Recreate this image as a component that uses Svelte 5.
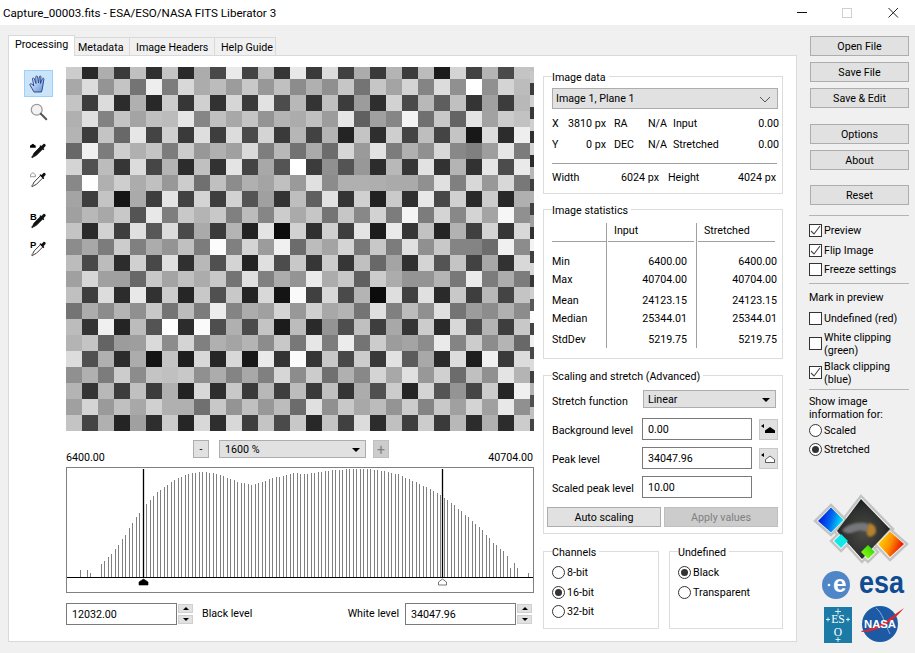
<script>
	const gridRows = [
		'cc 28 ae 3a c0 30 c4 2a ac 48 ea 44 bf 36 e8 3a dc 40 ac 3a b4 3c bc 1c d4 42 b4 4a c4',
		'a8 dc 94 c4 74 ee 7c d8 ac bc 9c c8 98 c0 8c b0 90 c6 74 c6 a4 d4 84 dc 90 ff 90 d4 bc',
		'c4 3c dc 2c b0 28 cc 36 d0 32 d6 3a e2 4c b8 34 c0 3c 9c 2e d2 4a b8 5e c0 34 a0 3c b8',
		'b0 e0 82 c4 a4 c0 bc e6 86 c0 a8 c4 94 b4 ac c0 9c e6 60 a0 86 f4 70 c8 64 e4 a2 cc c2',
		'b4 3c c4 68 e6 44 d0 3a de 3e dc 4a d4 3a b6 42 b4 24 c4 2e ce 44 be 44 c4 18 dc 2c ee',
		'68 f0 7c ce b0 c4 7c cc 98 b0 a0 da 7e b8 72 aa 6c d6 9a e2 7c b0 90 d8 88 80 9e e6 7c',
		'd4 50 bc 36 dc 46 b4 2c c0 32 e4 44 a8 54 ff 3c 90 54 98 2c b8 36 e2 32 b4 32 e6 4c ea',
		'88 fe b0 ce ac c0 98 cc 70 c0 8c b0 a4 c0 9a e0 8c b0 b0 ae aa aa 90 e0 80 d8 98 d8 78',
		'a4 3e c4 16 aa 3e e4 42 d4 3e d2 54 a0 34 be 60 e2 34 d0 22 ca 30 e8 48 d0 2a cc 28 b0',
		'a0 b8 a8 c8 54 e8 7e c8 b4 c8 80 bc 86 cc aa c6 74 c6 88 d2 7c f4 7c d4 88 d4 a4 f6 90',
		'c4 2a d2 3e e0 58 dc 4a aa 3a b4 22 e4 0c d2 30 d0 3e e4 1c ea 36 c2 24 b2 40 d4 36 d8',
		'8c a8 7c cc 80 ac 94 c0 7c fc 80 d4 9c f0 6c bc a4 d4 78 c8 7c e0 90 c8 84 84 6c f0 8c',
		'bc 48 bc 2c d0 48 e0 30 b8 50 d4 24 e0 4c c8 36 cc 36 c0 68 a4 30 d4 54 c4 42 a8 32 d8',
		'a0 d6 a0 a0 68 c8 a4 c0 ac c8 74 e0 80 ac 94 ea ac c8 60 cc ac 94 94 b4 78 ea 7c ac 7c',
		'c0 3e dc 2c e8 32 cc 26 c8 50 c8 24 d8 14 fa 40 d8 4a b4 0c de 40 e0 2a c8 3e b8 44 c4',
		'74 ac 8c b4 90 c8 74 bc 7c ec 84 ac a0 d4 98 d0 a8 b4 74 e0 80 bc 90 e0 74 9c 8c b0 8c',
		'bc 34 f0 24 bc 54 fe 2c fa 4e b0 4a c4 1c bc 2a 94 4e c0 3e a8 34 cc 2a d8 4a b4 3e c8',
		'b4 c4 64 9c 9e da 8c d4 80 b0 a4 b4 8c c8 78 e6 7c ec 74 cc 9c a4 8c ea 84 cc 8c b4 68',
		'dc 50 b0 2c ac 14 c4 1e d8 26 d8 18 ea 34 fa 36 c8 48 cc 38 e2 5c a8 2a dc 1e f0 3a dc',
		'90 b0 7c cc 8c c4 c0 c8 90 ac 84 a8 80 d6 8c cc 70 b0 88 d4 a8 e0 98 d0 6c c0 90 e4 b4',
		'b4 34 b8 3c c0 3c b0 22 d8 2e c8 3a b8 3e bc 3a c0 34 ac 50 cc 26 d4 54 94 46 cc 26 f0',
		'a0 d4 9a c0 a8 d0 b0 b0 70 c8 94 c0 98 bc 6c e0 90 c8 a8 bc 94 cc 84 c8 a0 d4 a0 e8 90',
		'c4 44 b0 24 a0 2e cc 26 d8 2e d8 3e c4 4a c8 28 c4 40 dc 2c c0 3e cc 3a b8 2c b0 2c cc'
	].map((r) => r.split(' '));
	// the last, clipped column is scaled differently: 12px rows
	const strip = 'c8 3c d0 38 d0 30 d4 2c b8 40 b4 40 a0 30 f4 40 d8 38 d0 58 fc 44 f0 48 dc 40 b4 50 c0 44'.split(' ');

	const gray = (h) => `#${h}${h}${h}`;

	// histogram envelope, [x, top y] in page pixels
	const envelope = [
		[101, 564], [112, 553], [123, 538], [133, 521], [140, 512], [147, 503], [157, 492], [168, 484],
		[178, 478], [189, 474], [199, 472], [206, 472], [217, 474], [228, 478], [238, 482], [252, 485],
		[262, 482], [273, 478], [284, 476], [294, 473], [303, 474], [321, 472], [335, 470],
		[350, 469], [368, 469], [383, 471], [397, 474], [413, 481], [430, 489], [440, 495], [451, 503],
		[462, 512], [472, 521], [483, 531], [493, 543], [503, 551]
	];

	function topAt(x) {
		if (x <= envelope[0][0]) return envelope[0][1];
		for (let i = 1; i < envelope.length; i++) {
			const [x0, y0] = envelope[i - 1];
			const [x1, y1] = envelope[i];
			if (x <= x1) return y0 + ((y1 - y0) * (x - x0)) / (x1 - x0);
		}
		return 556;
	}

	const overrides = { 0: 570, 2: 570, 3: 573, 123: 568, 124: 563, 125: 568, 128: 573 };
	const bars = [];
	for (let i = 0; i <= 128; i++) {
		if ([1, 4, 5, 126, 127].includes(i)) continue;
		const x = Math.floor(80 + i * 3.5);
		const top = overrides[i] ?? topAt(x);
		bars.push({ x: x - 67 + 0.5, y: Math.round(top) - 468 });
	}

	const stats = [
		['Min', '6400.00', 'row'],
		['Max', '40704.00', 'row wide'],
		['Mean', '24123.15', 'row'],
		['Median', '25344.01', 'row wide'],
		['StdDev', '5219.75', 'row']
	];
</script>

{#snippet radio(label, on = false)}
	<div class="opt">
		<span class="radio" class:on></span>
		<span>{label}</span>
	</div>
{/snippet}

{#snippet check(lines, on = false, tight = false)}
	<div class="opt" class:tight>
		<span class="box">
			{#if on}
				<svg width="11" height="11" viewBox="0 0 11 11"><path d="M1 6l3 3 6-8" fill="none" stroke="#444" stroke-width="1.1" /></svg>
			{/if}
		</span>
		<span>
			{#each lines as line, i}
				{#if i > 0}<br />{/if}{line}
			{/each}
		</span>
	</div>
{/snippet}

{#snippet spin()}
	<div class="spin">
		<span class="spin-btn"><i class="up"></i></span>
		<span class="spin-btn"><i class="down"></i></span>
	</div>
{/snippet}

{#snippet dropper(fill)}
	<path d="M13 5.500l-8 8-1.500 3-1.500 2 .8.8 2-1.500 3-1.500 8-8z" fill={fill} stroke="#111" stroke-width="1" />
	<path d="M11.500 5l1.500-1 1 1 2.500-2.500c1-1 3.500 1 2.500 2.500l-2.500 2.500 1 1-1 1.500z" fill="#111" />
{/snippet}

<div class="window">
	<header class="titlebar">
		<span class="title">Capture_00003.fits - ESA/ESO/NASA FITS Liberator 3</span>
		<svg class="win-controls" width="915" height="25" viewBox="0 0 915 25">
			<path d="M797 12.500h10" stroke="#111" />
			<rect x="842.500" y="8.500" width="9" height="9" fill="none" stroke="#d0d0d0" />
			<path d="M888.500 8l9.500 9.500M898 8l-9.500 9.500" stroke="#222" stroke-width="1" />
		</svg>
	</header>

	<div class="body">
		<div class="tabbed">
			<nav class="tabs">
				<span class="tab active">Processing</span>
				<span class="tab t-meta">Metadata</span>
				<span class="tab t-head">Image Headers</span>
				<span class="tab t-help">Help Guide</span>
			</nav>

			<main class="pane">
				<div class="tools">
					<button class="tool selected" aria-label="Pan">
						<svg width="20" height="20" viewBox="0 0 20 20">
							<defs>
								<linearGradient id="hand" x1="0" y1="0" x2="1" y2="1">
									<stop offset="0" stop-color="#fff" />
									<stop offset="1" stop-color="#5f8fd8" />
								</linearGradient>
							</defs>
							<path d="M5 18c-1-2-3-5-4-7-.5-1 1-1.800 1.800-1l2 2L3.500 5c-.2-1.200 1.300-1.500 1.700-.4L7 9.500 6.800 3c0-1.300 1.700-1.300 1.800 0l.9 6 .9-6.200c.2-1.200 1.700-1 1.600.2l-.6 6.500 2-4.800c.5-1 1.800-.5 1.500.6L13.600 13c-.3 2-.6 3.500-1.200 5z" fill="url(#hand)" stroke="#1d3f8c" stroke-width=".9" stroke-linejoin="round" />
						</svg>
					</button>
					<span class="tool mag">
						<svg width="20" height="20" viewBox="0 0 22 22">
							<circle cx="8.500" cy="8.500" r="6" fill="#f2f2f2" stroke="#9a9a9a" stroke-width="1.400" />
							<path d="M13 13l6 6" stroke="#555" stroke-width="2.200" stroke-linecap="round" />
						</svg>
					</span>
					<span class="tool d1">
						<svg width="18" height="18" viewBox="0 0 22 22">
							<path d="M0 7V4.500L3.500 2 7 4.500V7z" fill="#000" />
							{@render dropper('#111')}
						</svg>
					</span>
					<span class="tool d2">
						<svg width="18" height="18" viewBox="0 0 22 22">
							<path d="M.5 7V4.500L3.500 2l3 2.500V7z" fill="#fff" stroke="#666" stroke-width=".8" />
							{@render dropper('#fff')}
						</svg>
					</span>
					<span class="tool d3">
						<svg width="18" height="18" viewBox="0 0 22 22">
							<text x="0" y="9.500" class="tool-letter">B</text>
							{@render dropper('#111')}
						</svg>
					</span>
					<span class="tool d4">
						<svg width="18" height="18" viewBox="0 0 22 22">
							<text x="0" y="9.500" class="tool-letter">P</text>
							{@render dropper('#fff')}
						</svg>
					</span>
				</div>

				<div class="viewer">
					<div class="image">
						<div class="cells">
							{#each gridRows as row, r}
								<div class="cell-row" class:first={r === 0}>
									{#each row as v}
										<span style="background:{gray(v)}"></span>
									{/each}
								</div>
							{/each}
						</div>
						<div class="strip">
							<span class="strip-top"></span>
							{#each strip as v}
								<span style="background:{gray(v)}"></span>
							{/each}
						</div>
					</div>

					<div class="zoom-row">
						<span class="range-lo">6400.00</span>
						<div class="zoom-controls">
							<span class="btn zoom-btn">-</span>
							<div class="select zoom-select">
								<span>1600 %</span>
								<i class="caret"></i>
							</div>
							<span class="btn zoom-btn plus">+</span>
						</div>
						<span class="range-hi">40704.00</span>
					</div>

					<div class="histogram">
						<svg width="466" height="124" viewBox="0 0 466 124">
							{#each bars as b}
								<path d="M{b.x} {b.y}V109" stroke="#808080" />
							{/each}
							<path d="M0 109.500H466" stroke="#000" />
							<path d="M76.500 1V109M375.500 1V109" stroke="#000" stroke-width="1.300" />
							<path d="M72 117v-3l4.500-3 4.500 3v3z" fill="#000" stroke="#000" stroke-width=".6" />
							<path d="M371.500 117v-3l4-3 4 3v3z" fill="#fff" stroke="#555" stroke-width=".8" />
						</svg>
					</div>

					<div class="levels">
						<input class="field" value="12032.00" readonly />
						{@render spin()}
						<span class="lvl-black">Black level</span>
						<span class="lvl-white">White level</span>
						<input class="field" value="34047.96" readonly />
						{@render spin()}
					</div>
				</div>

				<div class="panels">
					<fieldset class="image-data">
						<legend>Image data</legend>
						<div class="select data-select">
							<span>Image 1, Plane 1</span>
							<svg width="12" height="7" viewBox="0 0 12 7"><path d="M1 1l5 5 5-5" fill="none" stroke="#555" /></svg>
						</div>
						<div class="readout">
							<span>X</span><span class="num">3810 px</span><span>RA</span><span class="num">N/A</span><span>Input</span><span class="num">0.00</span>
							<span>Y</span><span class="num">0 px</span><span>DEC</span><span class="num">N/A</span><span>Stretched</span><span class="num">0.00</span>
						</div>
						<div class="rule"></div>
						<div class="dims">
							<span>Width</span><span class="num">6024 px</span><span>Height</span><span class="num">4024 px</span>
						</div>
					</fieldset>

					<fieldset class="image-stats">
						<legend>Image statistics</legend>
						<div class="stats">
							<div class="stat-head"></div>
							<div class="stat-head col">Input</div>
							<div class="stat-head col">Stretched</div>
							{#each stats as [name, val, cls], i}
								<div class={cls} class:start={i === 0}>{name}</div>
								<div class="{cls} col num" class:start={i === 0}>{val}</div>
								<div class="{cls} col num" class:start={i === 0}>{val}</div>
							{/each}
						</div>
					</fieldset>

					<fieldset class="scaling">
						<legend>Scaling and stretch (Advanced)</legend>
						<div class="scale-grid">
							<span class="fn-label">Stretch function</span>
							<div class="select fn-select"><span>Linear</span><i class="caret"></i></div>
							<span>Background level</span>
							<input class="field small" value="0.00" readonly />
							<span class="btn pick" aria-label="Pick background">
								<svg width="17" height="17" viewBox="0 0 17 17"><path d="M1 5l3-2v4zM5 12v-2.500l5-3.500 5 3.500V12z" fill="#000" /></svg>
							</span>
							<span>Peak level</span>
							<input class="field small" value="34047.96" readonly />
							<span class="btn pick" aria-label="Pick peak">
								<svg width="17" height="17" viewBox="0 0 17 17"><path d="M1 5l3-2v4z" fill="#000" /><path d="M5.500 12.500v-3l4.500-3.500 4.500 3.500v3z" fill="#fff" stroke="#333" stroke-width=".8" /></svg>
							</span>
							<span>Scaled peak level</span>
							<input class="field small" value="10.00" readonly />
						</div>
						<div class="scale-actions">
							<span class="btn">Auto scaling</span>
							<span class="btn disabled">Apply values</span>
						</div>
					</fieldset>

					<div class="pair">
						<fieldset class="channels">
							<legend>Channels</legend>
							{@render radio('8-bit')}
							{@render radio('16-bit', true)}
							{@render radio('32-bit')}
						</fieldset>
						<fieldset class="undefined">
							<legend>Undefined</legend>
							{@render radio('Black', true)}
							{@render radio('Transparent')}
						</fieldset>
					</div>
				</div>
			</main>
		</div>

		<aside class="sidebar">
			<span class="btn side">Open File</span>
			<span class="btn side">Save File</span>
			<span class="btn side">Save &amp; Edit</span>
			<span class="btn side sep">Options</span>
			<span class="btn side">About</span>
			<span class="btn side sep2">Reset</span>
			<div class="side-rule first"></div>
			{@render check(['Preview'], true)}
			{@render check(['Flip Image'], true)}
			{@render check(['Freeze settings'], false, true)}
			<div class="side-rule second"></div>
			<div class="side-text mark">Mark in preview</div>
			{@render check(['Undefined (red)'])}
			<div class="multi">{@render check(['White clipping', '(green)'])}</div>
			<div class="multi">{@render check(['Black clipping', '(blue)'], true)}</div>
			<div class="side-rule"></div>
			<div class="side-text show">Show image<br />information for:</div>
			<div class="info-opts">
				{@render radio('Scaled')}
				{@render radio('Stretched', true)}
			</div>

			<svg class="logos" width="105" height="160" viewBox="10 0 105 160">
				<defs>
					<linearGradient id="blueg" x1="0" y1="0" x2="1" y2="0.3">
						<stop offset="0" stop-color="#0000d8" />
						<stop offset="0.6" stop-color="#0068f0" />
						<stop offset="1" stop-color="#00e0f0" />
					</linearGradient>
					<linearGradient id="fireg" x1="0" y1="0.2" x2="1" y2="0.6">
						<stop offset="0" stop-color="#ffe000" />
						<stop offset="0.5" stop-color="#ff9000" />
						<stop offset="1" stop-color="#e80000" />
					</linearGradient>
					<linearGradient id="greeng" x1="1" y1="0" x2="0" y2="1">
						<stop offset="0" stop-color="#20d000" />
						<stop offset="1" stop-color="#a0ff20" />
					</linearGradient>
					<radialGradient id="neb" cx="0.5" cy="0.55" r="0.6">
						<stop offset="0" stop-color="#4a4a46" />
						<stop offset="0.6" stop-color="#30322f" />
						<stop offset="1" stop-color="#121a1a" />
					</radialGradient>
					<filter id="soft"><feGaussianBlur stdDeviation="1" /></filter>
				</defs>
				<g stroke="#c4c4c4" stroke-width="2.500">
					<path d="M61 7L93 40 62 73 34 42z" fill="#fff" />
					<path d="M31 16L46 31 31 46 15 32z" fill="#fff" />
					<path d="M41 42L51 52 41 62 31 52z" fill="#fff" />
					<path d="M90 40L107 55 90 71 75 55z" fill="#fff" />
					<path d="M68 53L78 63 68 73 58 63z" fill="#fff" />
				</g>
				<path d="M61 10L90 40 62 70 37 42z" fill="url(#neb)" />
				<path d="M42 41c6-5 11-7 17-7 5-1 9 0 11 3l-3 6c-5-2-9-2-13 0-4 2-9 2-12-2z" fill="#77777a" filter="url(#soft)" />
				<path d="M69 34c4 1 7 3 7 8 0 3-3 5-6 6-3-1-4-4-3-7z" fill="#b5812f" filter="url(#soft)" />
				<path d="M31 18.500L43.500 31 31 43.500 18 32z" fill="url(#blueg)" />
				<path d="M41 45L48 52 41 59 34 52z" fill="#10e8e8" />
				<path d="M90 42.500L104 55 90 68 78 55z" fill="url(#fireg)" />
				<path d="M68 56L75 63 68 70 61 63z" fill="url(#greeng)" />

				<circle cx="36" cy="96" r="14" fill="#4f86c8" />
				<circle cx="29" cy="96" r="1.300" fill="#fff" />
				<text x="33" y="103" class="esa-e">e</text>
				<text x="59" y="104" class="esa" textLength="45" lengthAdjust="spacingAndGlyphs">esa</text>

				<rect x="24" y="118" width="28" height="36" fill="#1b7ba6" />
				<text x="38" y="134" class="eso">ES</text>
				<text x="38" y="147" class="eso">O</text>
				<path d="M38 119.500v6M35 122.500h6M38 148v5M35.500 150.500h5M26 130.500h4M28 128.500v4M46 130.500h4M48 128.500v4" stroke="#fff" stroke-width=".8" />

				<circle cx="80" cy="135" r="18" fill="#1c5aa6" />
				<path d="M76 119c6 4 9 16 14 26" fill="none" stroke="#cfe0f4" stroke-width=".6" />
				<path d="M61 142c16-2 30-14 43-23-10 12-24 24-42 24z" fill="#d8282a" />
				<text x="80" y="139" class="nasa" textLength="32" lengthAdjust="spacingAndGlyphs">NASA</text>
			</svg>
		</aside>
	</div>
</div>

<style>
	:global(body) {
		margin: 0;
	}

	.window {
		width: 915px;
		height: 653px;
		overflow: hidden;
		background: #f0f0f0;
		color: #000;
		font-family: Roboto, 'Noto Sans', sans-serif;
		font-size: 10.7px;
		line-height: 14px;
		display: flex;
		flex-direction: column;
	}

	.titlebar {
		position: relative;
		height: 25px;
		flex: none;
		background: #fff;
		display: flex;
		align-items: center;
		padding-left: 3px;
		font-size: 11.6px;
	}

	.win-controls {
		position: absolute;
		left: 0;
		top: 0;
	}

	.body {
		display: flex;
		padding: 10px 0 0 8px;
		flex: 1;
	}

	.tabbed {
		width: 789px;
		flex: none;
	}

	.tabs {
		display: flex;
		align-items: flex-end;
		height: 20px;
		position: relative;
		z-index: 1;
	}

	.tab {
		box-sizing: border-box;
		height: 18px;
		border: 1px solid #d9d9d9;
		border-left: 0;
		border-bottom: 0;
		padding-left: 3px;
		line-height: 19px;
		white-space: nowrap;
	}

	.tab.active {
		height: 21px;
		margin-bottom: -1px;
		width: 67px;
		background: #fff;
		border-left: 1px solid #d9d9d9;
		padding-left: 6px;
		line-height: 18px;
	}

	.t-meta {
		width: 55px;
	}

	.t-head {
		width: 85px;
		padding-left: 6px;
	}

	.t-help {
		width: 61px;
		padding-left: 6px;
	}

	.pane {
		box-sizing: border-box;
		height: 587px;
		background: #fff;
		border: 1px solid #d9d9d9;
		display: flex;
		padding: 11px 0 0 15px;
	}

	.tools {
		width: 29px;
		margin-right: 13px;
		display: flex;
		flex-direction: column;
		align-items: center;
		padding-top: 3px;
	}

	.tool {
		display: flex;
		align-items: center;
		justify-content: center;
		width: 29px;
		height: 22px;
		padding: 0;
		background: none;
		border: 0;
		flex: none;
	}

	.tool.selected {
		box-sizing: border-box;
		height: 27px;
		background: #cce4f7;
		border: 1px solid #99d1ff;
	}

	.mag {
		margin-top: 4px;
	}

	.d1 {
		margin-top: 17px;
	}

	.d2 {
		margin-top: 7px;
	}

	.d3 {
		margin-top: 19px;
	}

	.d4 {
		margin-top: 6px;
	}

	.tool-letter {
		font: bold 11.5px 'Liberation Sans', sans-serif;
		fill: #000;
	}

	.viewer {
		width: 468px;
		flex: none;
	}

	.image {
		display: flex;
		height: 364px;
		overflow: hidden;
	}

	.cell-row {
		display: flex;
		height: 16px;
	}

	.cell-row.first {
		height: 12px;
	}

	.cell-row span {
		width: 16px;
		height: 100%;
		display: block;
	}

	.strip {
		width: 4px;
		display: flex;
		flex-direction: column;
	}

	.strip span {
		display: block;
		height: 12px;
		flex: none;
	}

	.strip .strip-top {
		height: 4px;
		background: #c0c0c0;
	}

	.zoom-row {
		display: grid;
		grid-template-columns: 127px auto 1fr;
		height: 24px;
		margin-top: 9px;
	}

	.range-lo,
	.range-hi {
		align-self: end;
		line-height: 13px;
	}

	.range-hi {
		text-align: right;
		padding-right: 1px;
	}

	.zoom-controls {
		display: flex;
		align-items: flex-start;
		gap: 7px;
	}

	.btn {
		box-sizing: border-box;
		display: flex;
		align-items: center;
		justify-content: center;
		background: #e1e1e1;
		border: 1px solid #adadad;
		padding-top: 1px;
	}

	.zoom-btn {
		width: 16px;
		height: 18px;
		margin-right: 3px;
	}

	.zoom-btn.plus {
		margin: 0;
		background: #cccccc;
		border-color: #bfbfbf;
		color: #808080;
		font-size: 14px;
	}

	.select {
		box-sizing: border-box;
		display: flex;
		align-items: center;
		justify-content: space-between;
		background: #e1e1e1;
		border: 1px solid #adadad;
		padding: 1px 4px 0 3px;
	}

	.zoom-select {
		width: 147px;
		height: 18px;
		padding-left: 5px;
	}

	.caret {
		width: 0;
		height: 0;
		margin-right: 1px;
		border: 4px solid transparent;
		border-top: 4px solid #000;
		border-bottom: 0;
	}

	.histogram {
		box-sizing: border-box;
		height: 126px;
		margin-top: 3px;
		border: 1px solid #808080;
	}

	.histogram svg {
		display: block;
	}

	.levels {
		display: flex;
		align-items: center;
		margin-top: 10px;
		height: 22px;
		padding-right: 2px;
	}

	.field {
		box-sizing: border-box;
		width: 111px;
		height: 22px;
		border: 1px solid #7a7a7a;
		padding: 0 5px;
		font: inherit;
		color: #000;
		background: #fff;
		outline: none;
		border-radius: 0;
	}

	.spin {
		display: flex;
		flex-direction: column;
		gap: 2px;
		margin-left: 1px;
		width: 15px;
	}

	.spin-btn {
		box-sizing: border-box;
		width: 15px;
		height: 9px;
		background: #e1e1e1;
		border: 1px solid #d0d0d0;
		display: flex;
		align-items: center;
		justify-content: center;
	}

	.spin-btn i {
		width: 0;
		height: 0;
		border: 3px solid transparent;
	}

	.spin-btn .up {
		border-top: 0;
		border-bottom: 3px solid #000;
	}

	.spin-btn .down {
		border-bottom: 0;
		border-top: 3px solid #000;
	}

	.lvl-black {
		margin-left: 9px;
		flex: 1;
	}

	.lvl-white {
		margin-right: 6px;
	}

	.panels {
		width: 240px;
		margin-left: 9px;
		padding-top: 2px;
		flex: none;
	}

	fieldset {
		box-sizing: border-box;
		margin: 0;
		padding: 0 0 0 8px;
		border: 1px solid #dcdcdc;
		min-width: 0;
	}

	legend {
		padding: 0 3px 0 0;
		height: 14px;
		line-height: 17px;
	}

	.image-data {
		height: 125px;
	}

	.data-select {
		width: 226px;
		height: 21px;
		margin-top: 5px;
		padding-right: 6px;
	}

	.readout {
		display: grid;
		grid-template-columns: 16px 38px 32px 29px 1fr auto;
		width: 227px;
		margin-top: 7px;
		row-gap: 5px;
		line-height: 16px;
	}

	.readout span {
		white-space: nowrap;
	}

	.readout span:nth-child(6n + 3) {
		padding-left: 8px;
	}

	.readout span:nth-child(6n + 5) {
		padding-left: 6px;
	}

	.num {
		text-align: right;
	}

	.rule {
		width: 225px;
		height: 1px;
		background: #a0a0a0;
		margin-top: 10px;
	}

	.dims {
		display: grid;
		grid-template-columns: 35px 72px 50px 67px;
		margin-top: 6px;
		line-height: 16px;
	}

	.dims span:nth-child(3) {
		padding-left: 9px;
	}

	.image-stats {
		height: 157px;
		margin-top: 8px;
	}

	.stats {
		display: grid;
		grid-template-columns: 54px 90px 81px;
		margin-top: 7px;
	}

	.stat-head {
		height: 19px;
		line-height: 15px;
		box-shadow: inset 0 -1px 0 #a0a0a0;
	}

	.stat-head.col {
		padding-left: 7px;
		border-left: 1px solid #a0a0a0;
		box-shadow: none;
		background: linear-gradient(#a0a0a0, #a0a0a0) 1px 100% / calc(100% - 3px) 1px no-repeat;
	}

	.row {
		height: 18px;
		line-height: 20px;
	}

	.row.wide {
		height: 21px;
	}

	.row.start {
		height: 28px;
		padding-top: 10px;
		box-sizing: border-box;
	}

	.col.num {
		border-left: 1px solid #a0a0a0;
		padding-right: 9px;
	}

	.col.num:nth-child(3n) {
		padding-right: 0;
	}

	.scaling {
		height: 166px;
		margin-top: 9px;
	}

	.scale-grid {
		display: grid;
		grid-template-columns: 90px 110px 26px;
		grid-template-rows: 21px 22px 22px 22px;
		row-gap: 7px;
		align-items: center;
		margin-top: 8px;
	}

	.scale-grid .select {
		grid-column: 2 / span 2;
		align-self: start;
		width: 133px;
		margin-left: 1px;
		height: 18px;
		padding-left: 4px;
	}

	.scale-grid > span {
		white-space: nowrap;
	}

	.scale-grid > span:not(.pick) {
		padding-top: 3px;
	}

	.scale-grid > .fn-label {
		align-self: start;
		line-height: 18px;
		padding-top: 1px;
	}

	.field.small {
		width: 110px;
	}

	.pick {
		width: 19px;
		height: 21px;
		margin-left: 7px;
		padding: 0;
		background: #e1e1e1;
		border-color: #c8c8c8;
	}

	.scale-actions {
		display: flex;
		gap: 3px;
		margin: 9px 0 0 -5px;
	}

	.scale-actions .btn {
		width: 114px;
		height: 20px;
	}

	.btn.disabled {
		background: #cccccc;
		border-color: #bfbfbf;
		color: #808080;
	}

	.pair {
		display: flex;
		gap: 10px;
		margin-top: 10px;
	}

	.channels,
	.undefined {
		height: 85px;
		padding-top: 5px;
	}

	.channels {
		width: 116px;
	}

	.undefined {
		width: 114px;
	}

	.opt {
		display: flex;
		align-items: center;
		gap: 2px;
		height: 20px;
		line-height: 13px;
	}

	.channels .opt,
	.undefined .opt {
		height: 19.500px;
	}

	.radio {
		box-sizing: border-box;
		width: 13px;
		height: 13px;
		border: 1px solid #333;
		border-radius: 50%;
		background: #fff;
		flex: none;
		display: flex;
		align-items: center;
		justify-content: center;
	}

	.radio.on::after {
		content: '';
		width: 7px;
		height: 7px;
		border-radius: 50%;
		background: #333;
	}

	.box {
		box-sizing: border-box;
		width: 13px;
		height: 13px;
		border: 1px solid #333;
		background: #fff;
		flex: none;
		display: flex;
		align-items: center;
		justify-content: center;
	}

	.sidebar {
		width: 105px;
		margin-left: 13px;
		padding-top: 1px;
		display: flex;
		flex-direction: column;
		flex: none;
	}

	.btn.side {
		width: 99px;
		height: 20px;
		margin-bottom: 6px;
		flex: none;
	}

	.btn.side.sep {
		margin-top: 10px;
	}

	.btn.side.sep2 {
		margin-top: 9px;
		margin-bottom: 0;
	}

	.side-rule {
		width: 100px;
		height: 1px;
		background: #b4b4b4;
		margin: 3px 0 6px -1px;
		flex: none;
	}

	.side-rule.first {
		margin: 10px 0 4px -1px;
	}

	.side-rule.second {
		margin: 4px 0 7px -1px;
	}

	.opt.tight {
		margin-top: -1px;
	}

	.sidebar > .opt,
	.multi,
	.info-opts {
		margin-left: -1px;
		flex: none;
	}

	.info-opts .opt {
		height: 19px;
	}

	.side-text {
		margin-left: -1px;
		flex: none;
	}

	.mark {
		margin-bottom: 3px;
	}

	.multi {
		height: 27px;
		margin-top: 2px;
	}

	.multi .opt {
		height: 27px;
	}

	.show {
		line-height: 12.500px;
	}

	.logos {
		margin-top: 30px;
		flex: none;
		display: block;
	}

	.esa-e {
		font: bold 24px 'Liberation Sans', sans-serif;
		fill: #fff;
	}

	.esa {
		font: bold 31px 'Liberation Sans', sans-serif;
		fill: #0f4c92;
	}

	.eso {
		font: 11.5px 'Liberation Serif', serif;
		fill: #fff;
		text-anchor: middle;
	}

	.nasa {
		font: bold 11px 'Liberation Sans', sans-serif;
		fill: #fff;
		text-anchor: middle;
	}
</style>
